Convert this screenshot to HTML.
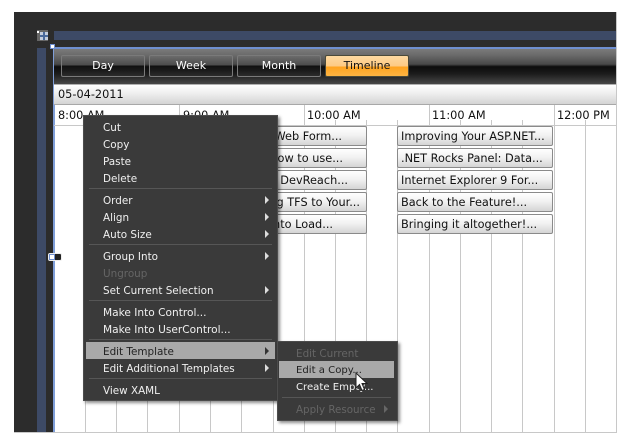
<!DOCTYPE html>
<html><head><meta charset="utf-8">
<style>
html,body{margin:0;padding:0;background:#fff}
#r{position:relative;width:629px;height:447px;overflow:hidden;background:#fff;font:11px/14px "DejaVu Sans","Liberation Sans",sans-serif}
#r div{position:absolute;box-sizing:border-box}
.t{white-space:nowrap;font-size:10.4px;line-height:14px;margin-top:1px}
.m{color:#f0f0f0}
.d{color:#656565}
.s{height:1px;background:#565656}
.a{width:0;height:0;border-left:4px solid #ddd;border-top:4px solid transparent;border-bottom:4px solid transparent}
.b{top:55px;height:22px;border:1px solid #7a7a7a;border-radius:2px;background:linear-gradient(#6b6b6b 0,#4c4c4c 45%,#101010 50%,#1c1c1c 75%,#2c2c2c 100%);color:#fff;text-align:center;line-height:20px;font-size:11px}
.e{height:20px;border:1px solid #8a8a8a;border-radius:2px;background:linear-gradient(#fff 0,#f2f2f2 45%,#d4d4d4 100%);color:#111;font-size:11.3px;line-height:20px;padding-left:3px;white-space:nowrap;overflow:hidden}
.v{width:1px;background:#c8c8c8;top:126px;height:306px}
.k{width:1px;background:#c8c8c8;top:120px;height:6px}
.h{width:1px;background:#c8c8c8;top:105px;height:21px}
.l{top:109px;color:#111;font-size:11.3px;line-height:14px;white-space:nowrap}
</style></head><body>
<div id="r">
<div style="left:14px;top:12px;width:602px;height:421px;background:#2c2c2c"></div>
<div style="left:54px;top:31px;width:562px;height:9px;background:#3d4a66"></div>
<div style="left:37px;top:48px;width:9px;height:385px;background:#3d4a66"></div>
<div style="left:37px;top:30px;width:11px;height:11px;background:#666"></div>
<div style="left:40px;top:32px;width:8px;height:8px;background:#c4cddd"></div>
<div style="left:43px;top:32px;width:2px;height:8px;background:#4a6a9c"></div>
<div style="left:40px;top:35px;width:8px;height:2px;background:#4a6a9c"></div>
<div style="left:37px;top:31px;width:2px;height:2px;background:#fff"></div>
<div style="left:53px;top:48px;width:564px;height:385px;background:#fff"></div>
<div style="left:53px;top:48px;width:2px;height:385px;background:#7f9ed8"></div>
<div style="left:54px;top:48px;width:562px;height:36px;background:linear-gradient(#7d7d7d 0,#6a6a6a 20%,#484848 45%,#0c0c0c 52%,#1c1c1c 72%,#474747 100%)"></div>
<div style="left:54px;top:47px;width:563px;height:2px;background:#6f8fd0"></div>
<div style="left:50px;top:44px;width:5px;height:5px;background:#fff;border:1px solid #6f8fd0"></div>
<div class="b" style="left:61px;width:84px">Day</div>
<div class="b" style="left:149px;width:84px">Week</div>
<div class="b" style="left:237px;width:84px">Month</div>
<div class="b" style="left:325px;width:84px;border-color:#4a4a3a;color:#111;background:linear-gradient(#fdd9a0 0,#fdca84 50%,#ffa31f 55%,#fdb443 100%)">Timeline</div>
<div style="left:54px;top:84px;width:562px;height:21px;border-top:1px solid #b0b0b0;border-bottom:1px solid #a8a8a8;background:linear-gradient(#fff 0,#f0f0f0 40%,#d4d4d4 100%)"></div>
<div class="l" style="left:58px;top:88px">05-04-2011</div>
<div style="left:616px;top:12px;width:1px;height:421px;background:#c8c8c8"></div>
<div style="left:14px;top:432px;width:603px;height:1px;background:#c8c8c8"></div>
<div style="left:54px;top:125px;width:562px;height:1px;background:#c8c8c8"></div>
<div class="l" style="left:58px">8:00 AM</div>
<div class="l" style="left:183px">9:00 AM</div>
<div class="l" style="left:307px">10:00 AM</div>
<div class="l" style="left:432px">11:00 AM</div>
<div class="l" style="left:557px">12:00 PM</div>
<div class="h" style="left:179px"></div><div class="h" style="left:304px"></div><div class="h" style="left:429px"></div><div class="h" style="left:554px"></div>
<div class="k" style="left:335px"></div><div class="k" style="left:366px"></div><div class="k" style="left:397px"></div><div class="k" style="left:460px"></div><div class="k" style="left:491px"></div><div class="k" style="left:522px"></div><div class="k" style="left:585px"></div>
<div class="v" style="left:85px"></div><div class="v" style="left:116px"></div><div class="v" style="left:147px"></div><div class="v" style="left:179px"></div><div class="v" style="left:210px"></div><div class="v" style="left:241px"></div><div class="v" style="left:273px"></div><div class="v" style="left:304px"></div><div class="v" style="left:335px"></div><div class="v" style="left:366px"></div><div class="v" style="left:397px"></div><div class="v" style="left:429px"></div><div class="v" style="left:460px"></div><div class="v" style="left:491px"></div><div class="v" style="left:522px"></div><div class="v" style="left:554px"></div><div class="v" style="left:585px"></div>

<div class="e" style="left:240px;top:126px;width:127px;text-align:right;padding-right:24px">Web Form...</div>
<div class="e" style="left:240px;top:148px;width:127px;text-align:right;padding-right:23px">how to use...</div>
<div class="e" style="left:240px;top:170px;width:127px;text-align:right;padding-right:18px">e DevReach...</div>
<div class="e" style="left:240px;top:192px;width:127px;text-align:right;padding-right:6px">g TFS to Your...</div>
<div class="e" style="left:240px;top:214px;width:127px;text-align:right;padding-right:33px">nto Load...</div>
<div class="e" style="left:397px;top:126px;width:156px">Improving Your ASP.NET...</div>
<div class="e" style="left:397px;top:148px;width:156px">.NET Rocks Panel: Data...</div>
<div class="e" style="left:397px;top:170px;width:156px">Internet Explorer 9 For...</div>
<div class="e" style="left:397px;top:192px;width:156px">Back to the Feature!...</div>
<div class="e" style="left:397px;top:214px;width:156px">Bringing it altogether!...</div>

<div style="left:48px;top:253px;width:14px;height:8px;background:#222;border-radius:2px;border:1px solid #eee"></div>
<div style="left:49px;top:254px;width:6px;height:6px;background:#fff;border:1px solid #6f8fd0"></div>

<div style="left:83px;top:115px;width:195px;height:286px;background:#3a3a3a;border:1px solid #4c4c4c;box-shadow:2px 2px 3px rgba(0,0,0,.45)"></div>
<div class="t m" style="left:103px;top:120px">Cut</div>
<div class="t m" style="left:103px;top:137px">Copy</div>
<div class="t m" style="left:103px;top:154px">Paste</div>
<div class="t m" style="left:103px;top:171px">Delete</div>
<div class="s" style="left:89px;top:188px;width:183px"></div>
<div class="t m" style="left:103px;top:193px">Order</div>
<div class="t m" style="left:103px;top:210px">Align</div>
<div class="t m" style="left:103px;top:227px">Auto Size</div>
<div class="s" style="left:89px;top:244px;width:183px"></div>
<div class="t m" style="left:103px;top:249px">Group Into</div>
<div class="t d" style="left:103px;top:266px">Ungroup</div>
<div class="t m" style="left:103px;top:283px">Set Current Selection</div>
<div class="s" style="left:89px;top:300px;width:183px"></div>
<div class="t m" style="left:103px;top:305px;font-size:10.6px">Make Into Control...</div>
<div class="t m" style="left:103px;top:322px;font-size:10.6px">Make Into UserControl...</div>
<div class="s" style="left:89px;top:339px;width:183px"></div>
<div style="left:86px;top:342px;width:189px;height:17px;background:#a9a9a9"></div>
<div class="t" style="left:103px;top:344px;color:#222">Edit Template</div>
<div class="t m" style="left:103px;top:361px">Edit Additional Templates</div>
<div class="s" style="left:89px;top:378px;width:183px"></div>
<div class="t m" style="left:103px;top:383px">View XAML</div>
<div class="a" style="left:265px;top:196px"></div>
<div class="a" style="left:265px;top:213px"></div>
<div class="a" style="left:265px;top:230px"></div>
<div class="a" style="left:265px;top:252px"></div>
<div class="a" style="left:265px;top:286px"></div>
<div class="a" style="left:265px;top:347px;border-left-color:#333"></div>
<div class="a" style="left:265px;top:364px"></div>

<div style="left:277px;top:341px;width:121px;height:80px;background:#3a3a3a;border:1px solid #4c4c4c;box-shadow:2px 2px 3px rgba(0,0,0,.45)"></div>
<div style="left:279px;top:361px;width:115px;height:17px;background:#a9a9a9"></div>
<div class="t d" style="left:296px;top:346px">Edit Current</div>
<div class="t" style="left:296px;top:363px;color:#222;font-size:10.1px">Edit a Copy...</div>
<div class="t m" style="left:296px;top:380px;font-size:10.1px">Create Empty...</div>
<div class="s" style="left:282px;top:397px;width:109px"></div>
<div class="t d" style="left:296px;top:402px;font-size:10.3px">Apply Resource</div>
<div class="a" style="left:384px;top:405px;border-left-color:#666"></div>
<svg style="position:absolute;left:355px;top:372px" width="14" height="20" viewBox="0 0 14 20"><path d="M1 1V16L4.5 12.5L7 18.5L9.5 17.5L7 11.5H12Z" fill="#fff" stroke="#222" stroke-width="1"/></svg>
</div>
</body></html>
